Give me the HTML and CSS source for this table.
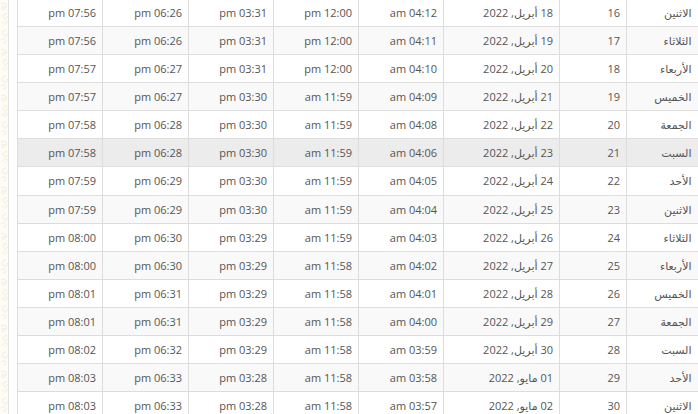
FILE: index.html
```html
<!DOCTYPE html>
<html lang="ar">
<head>
<meta charset="utf-8">
<title>مواقيت الصلاة</title>
<link rel="stylesheet" href="styles.css">
</head>
<body>
<div class="page">
  <div class="ornament">
    <svg width="8" height="414" viewBox="0 0 8 414" aria-hidden="true">
      <defs>
        <pattern id="swirl" width="8" height="46" patternUnits="userSpaceOnUse">
          <path d="M1 4c3-2 6 0 5 3s-4 3-4 1 2-2 3-1" fill="none" stroke="#f1e9d2" stroke-width="1"/>
          <path d="M7 14c-3-1-5 2-3 4s4 0 3-2" fill="none" stroke="#f1e9d2" stroke-width="1"/>
          <path d="M2 22c2 3 5 2 5 0s-3-2-3 0" fill="none" stroke="#f3ecd8" stroke-width="1"/>
          <path d="M6 30c-3 0-5 3-3 5s5 1 4-2" fill="none" stroke="#f1e9d2" stroke-width="1"/>
          <path d="M1 40c2-2 5-1 5 1s-2 3-3 1" fill="none" stroke="#f3ecd8" stroke-width="1"/>
        </pattern>
      </defs>
      <rect width="8" height="414" fill="url(#swirl)"/>
    </svg>
  </div>
  <main class="content">
    <table class="times" dir="rtl">
      <colgroup>
        <col class="c-day"><col class="c-num"><col class="c-date">
        <col class="c-time"><col class="c-time"><col class="c-time"><col class="c-time2"><col class="c-time">
      </colgroup>
      <tbody>
        <tr><td>الاثنين</td><td>16</td><td>18 أبريل, 2022</td><td>am 04:12</td><td>pm 12:00</td><td>pm 03:31</td><td>pm 06:26</td><td>pm 07:56</td></tr>
        <tr><td>الثلاثاء</td><td>17</td><td>19 أبريل, 2022</td><td>am 04:11</td><td>pm 12:00</td><td>pm 03:31</td><td>pm 06:26</td><td>pm 07:56</td></tr>
        <tr><td>الأربعاء</td><td>18</td><td>20 أبريل, 2022</td><td>am 04:10</td><td>pm 12:00</td><td>pm 03:31</td><td>pm 06:27</td><td>pm 07:57</td></tr>
        <tr><td>الخميس</td><td>19</td><td>21 أبريل, 2022</td><td>am 04:09</td><td>am 11:59</td><td>pm 03:30</td><td>pm 06:27</td><td>pm 07:57</td></tr>
        <tr><td>الجمعة</td><td>20</td><td>22 أبريل, 2022</td><td>am 04:08</td><td>am 11:59</td><td>pm 03:30</td><td>pm 06:28</td><td>pm 07:58</td></tr>
        <tr class="today"><td>السبت</td><td>21</td><td>23 أبريل, 2022</td><td>am 04:06</td><td>am 11:59</td><td>pm 03:30</td><td>pm 06:28</td><td>pm 07:58</td></tr>
        <tr><td>الأحد</td><td>22</td><td>24 أبريل, 2022</td><td>am 04:05</td><td>am 11:59</td><td>pm 03:30</td><td>pm 06:29</td><td>pm 07:59</td></tr>
        <tr><td>الاثنين</td><td>23</td><td>25 أبريل, 2022</td><td>am 04:04</td><td>am 11:59</td><td>pm 03:30</td><td>pm 06:29</td><td>pm 07:59</td></tr>
        <tr><td>الثلاثاء</td><td>24</td><td>26 أبريل, 2022</td><td>am 04:03</td><td>am 11:59</td><td>pm 03:29</td><td>pm 06:30</td><td>pm 08:00</td></tr>
        <tr><td>الأربعاء</td><td>25</td><td>27 أبريل, 2022</td><td>am 04:02</td><td>am 11:58</td><td>pm 03:29</td><td>pm 06:30</td><td>pm 08:00</td></tr>
        <tr><td>الخميس</td><td>26</td><td>28 أبريل, 2022</td><td>am 04:01</td><td>am 11:58</td><td>pm 03:29</td><td>pm 06:31</td><td>pm 08:01</td></tr>
        <tr><td>الجمعة</td><td>27</td><td>29 أبريل, 2022</td><td>am 04:00</td><td>am 11:58</td><td>pm 03:29</td><td>pm 06:31</td><td>pm 08:01</td></tr>
        <tr><td>السبت</td><td>28</td><td>30 أبريل, 2022</td><td>am 03:59</td><td>am 11:58</td><td>pm 03:29</td><td>pm 06:32</td><td>pm 08:02</td></tr>
        <tr><td>الأحد</td><td>29</td><td>01 مايو, 2022</td><td>am 03:58</td><td>am 11:58</td><td>pm 03:28</td><td>pm 06:33</td><td>pm 08:03</td></tr>
        <tr><td>الاثنين</td><td>30</td><td>02 مايو, 2022</td><td>am 03:57</td><td>am 11:58</td><td>pm 03:28</td><td>pm 06:33</td><td>pm 08:03</td></tr>
      </tbody>
    </table>
  </main>
</div>
</body>
</html>
```
FILE: styles.css
```css
html, body {
  margin: 0;
  padding: 0;
  background: #fff;
  overflow: hidden;
}

.page {
  display: flex;
  height: 414px;
  overflow: hidden;
}

.ornament {
  flex: none;
  width: 8px;
  background: #fefcf7;
}

.ornament svg {
  display: block;
}

.content {
  flex: 1;
  min-width: 0;
  border-left: 1px solid #e4e4e4;
  padding-left: 8px;
  overflow: hidden;
}

.times {
  margin-top: -2px;
  width: 682px;
  table-layout: fixed;
  border-collapse: collapse;
  font-family: "Open Sans", "DejaVu Sans", sans-serif;
  font-size: 11px;
  color: #555;
}

.c-day { width: 73px; }
.c-num { width: 67px; }
.c-date { width: 116px; }
.c-time { width: 85px; }
.c-time2 { width: 86px; }

.times td {
  border: 1px solid #ddd;
  padding: 5px 6px;
  line-height: 17.08px;
  text-align: right;
  white-space: nowrap;
  overflow: hidden;
}

.times td:first-child {
  border-right: 0;
  padding-right: 8px;
}

.times tr:nth-child(even) td {
  background: #f9f9f9;
}

.times tr.today td {
  background: #ececec;
}
```
